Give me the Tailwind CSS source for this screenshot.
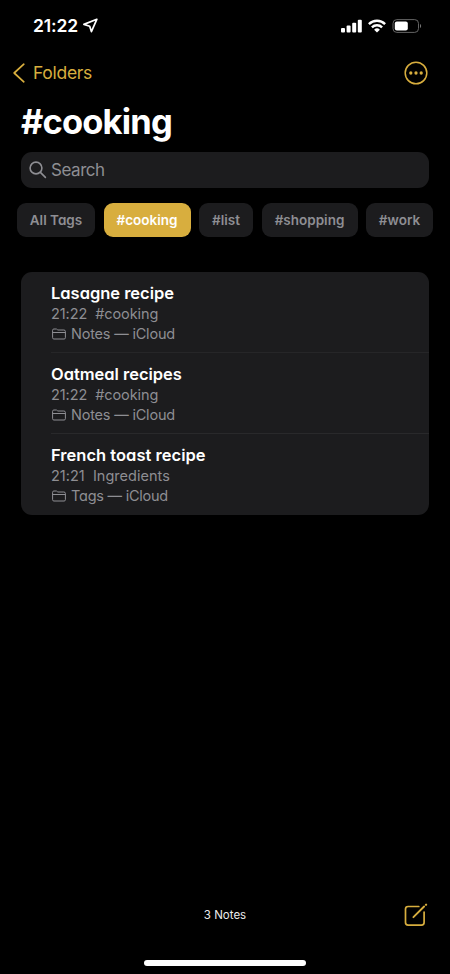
<!DOCTYPE html>
<html lang="en">
<head>
<meta charset="utf-8">
<meta name="viewport" content="width=device-width, initial-scale=1">
<title>Notes</title>
<script src="https://cdn.jsdelivr.net/npm/@tailwindcss/browser@4"></script>
</head>
<body class="bg-black">
<div class="flex h-[974px] w-[450px] flex-col overflow-hidden bg-black font-['Inter',sans-serif] text-white antialiased">
  <header class="flex h-[50px] shrink-0 items-center justify-between pt-px pr-[28px] pl-[33px]">
    <div class="flex items-center gap-[5px]">
      <span class="text-[17.5px] leading-[22px] font-semibold tracking-[-0.15px]">21:22</span>
      <svg class="h-[15px] w-[15px]" viewBox="0 0 15 15" fill="none" stroke="white" stroke-width="1.7" stroke-linejoin="round"><path d="M13.8 1.3 .9 6.4 6.7 8.2 8.4 13.6Z"/></svg>
    </div>
    <div class="flex items-center">
      <svg class="h-[14px] w-[21px]" viewBox="0 0 21 14" fill="white"><rect x="0" y="9" width="4" height="4.5" rx="1"/><rect x="5.6" y="6.5" width="4" height="7" rx="1"/><rect x="11.2" y="3.8" width="4" height="9.7" rx="1"/><rect x="16.8" y="0.7" width="4" height="12.8" rx="1"/></svg>
      <svg class="ml-[6.5px] h-[14px] w-[18px]" viewBox="0 0 18 14" fill="none" stroke="white" stroke-width="2.4"><path d="M.9 5.1a11.6 11.6 0 0 1 16.2 0"/><path d="M3.9 8.3a7.3 7.3 0 0 1 10.2 0"/><path d="M9 13.5 6.1 10.7a4.2 4.2 0 0 1 5.8 0Z" fill="white" stroke="none"/></svg>
      <svg class="ml-[6px] h-[14px] w-[30px]" viewBox="0 0 30 14" fill="none"><rect x="1" y=".6" width="25.5" height="12.8" rx="3.8" stroke="#646464" stroke-width="1"/><rect x="2.8" y="2.4" width="13" height="9.2" rx="2" fill="white"/><path d="M28 5c1.5.7 1.5 3.3 0 4Z" fill="#777"/></svg>
    </div>
  </header>

  <nav class="flex h-[45px] shrink-0 items-center justify-between pr-[22px] pl-[13px] text-[#d8ae3e]">
    <div class="flex items-center gap-[7px]">
      <svg class="h-[20px] w-[13px]" viewBox="0 0 13 20" fill="none" stroke="currentColor" stroke-width="1.7" stroke-linecap="round" stroke-linejoin="round"><path d="M10.8 1.2 1.2 10l9.6 8.8"/></svg>
      <span class="text-[17.5px] leading-6 tracking-[-0.3px]">Folders</span>
    </div>
    <svg class="h-6 w-6" viewBox="0 0 24 24" fill="none" stroke="currentColor" stroke-width="1.5"><circle cx="12" cy="12" r="10.8"/><g fill="currentColor" stroke="none"><circle cx="6.8" cy="12" r="1.65"/><circle cx="12" cy="12" r="1.65"/><circle cx="17.2" cy="12" r="1.65"/></g></svg>
  </nav>

  <h1 class="mt-[4px] h-[44px] shrink-0 pl-[21px] text-[34.5px] leading-[46px] font-bold tracking-[-0.85px]">#cooking</h1>

  <div class="mx-[21px] mt-[9px] flex h-[36px] shrink-0 items-center gap-[4px] rounded-[11px] bg-[#1c1c1e] pl-[8px] text-[#8e8e93]">
    <svg class="h-[18px] w-[18px]" viewBox="0 0 18 18" fill="none" stroke="currentColor" stroke-width="1.6" stroke-linecap="round"><circle cx="7" cy="7" r="5.9"/><path d="m11.4 11.4 5 5"/></svg>
    <span class="text-[17px] leading-6 tracking-[-0.45px]">Search</span>
  </div>

  <div class="mt-[15px] flex h-[34px] shrink-0 gap-[8.5px] pl-[17px] text-[13.5px] font-semibold text-[#8e8e93] [font-feature-settings:'cv11']">
    <div class="flex w-[78px] shrink-0 items-center justify-center rounded-[9px] bg-[#1c1c1e]">All Tags</div>
    <div class="flex w-[87px] shrink-0 items-center justify-center rounded-[9px] bg-[#d8ae3e] text-white">#cooking</div>
    <div class="flex w-[54px] shrink-0 items-center justify-center rounded-[9px] bg-[#1c1c1e]">#list</div>
    <div class="flex w-[96px] shrink-0 items-center justify-center rounded-[9px] bg-[#1c1c1e]">#shopping</div>
    <div class="flex w-[67px] shrink-0 items-center justify-center rounded-[9px] bg-[#1c1c1e]">#work</div>
  </div>

  <main class="mx-[21px] mt-[35px] h-[243px] shrink-0 rounded-[11px] bg-[#1c1c1e] pl-[30px] text-[14.5px] leading-[20px] tracking-[-0.08px] text-[#8e8e93] [font-feature-settings:'cv11']">
    <article class="h-[81px] border-b border-[#262628] pt-[10px]">
      <h2 class="h-[22px] text-[16.5px] leading-[22px] font-semibold tracking-[-0.02px] text-white">Lasagne recipe</h2>
      <p class="whitespace-pre">21:22  #cooking</p>
      <p class="flex items-center gap-[5px] pl-px"><svg class="h-[12px] w-[14px]" viewBox="0 0 14 12" fill="none" stroke="currentColor"><path d="M.6 9.7V2.3Q.6 1 1.9 1h2.2q.6 0 1 .4l.7.6h6.1q1.5 0 1.5 1.5v6.2q0 1.3-1.3 1.3H1.9Q.6 11 .6 9.7ZM.6 4.5h12.8"/></svg><span class="tracking-[-0.2px]">Notes — iCloud</span></p>
    </article>
    <article class="h-[81px] border-b border-[#29292b] pt-[10px]">
      <h2 class="h-[22px] text-[16.5px] leading-[22px] font-semibold tracking-[-0.02px] text-white">Oatmeal recipes</h2>
      <p class="whitespace-pre">21:22  #cooking</p>
      <p class="flex items-center gap-[5px] pl-px"><svg class="h-[12px] w-[14px]" viewBox="0 0 14 12" fill="none" stroke="currentColor"><path d="M.6 9.7V2.3Q.6 1 1.9 1h2.2q.6 0 1 .4l.7.6h6.1q1.5 0 1.5 1.5v6.2q0 1.3-1.3 1.3H1.9Q.6 11 .6 9.7ZM.6 4.5h12.8"/></svg><span class="tracking-[-0.2px]">Notes — iCloud</span></p>
    </article>
    <article class="h-[81px] pt-[10px]">
      <h2 class="h-[22px] text-[16.5px] leading-[22px] font-semibold tracking-[0.02px] text-white">French toast recipe</h2>
      <p class="whitespace-pre tracking-[0.02px]">21:21  Ingredients</p>
      <p class="flex items-center gap-[5px] pl-px"><svg class="h-[12px] w-[14px]" viewBox="0 0 14 12" fill="none" stroke="currentColor"><path d="M.6 9.7V2.3Q.6 1 1.9 1h2.2q.6 0 1 .4l.7.6h6.1q1.5 0 1.5 1.5v6.2q0 1.3-1.3 1.3H1.9Q.6 11 .6 9.7ZM.6 4.5h12.8"/></svg><span class="tracking-[-0.24px]">Tags — iCloud</span></p>
    </article>
  </main>

  <footer class="mt-auto h-[74px] shrink-0">
    <div class="grid h-[30px] grid-cols-[1fr_auto_1fr] items-center pr-[22px] pl-[22px]">
      <span></span>
      <span class="text-[11.5px] leading-[16px] text-[#ececec]">3 Notes</span>
      <svg class="h-[24px] w-[24px] justify-self-end text-[#d8ae3e]" viewBox="0 0 24 24" fill="none" stroke="currentColor" stroke-width="1.7" stroke-linecap="round"><path d="M14.8 3.5H4.1Q1.5 3.5 1.5 6.1V19.5Q1.5 22.1 4.1 22.1H17.5Q20.1 22.1 20.1 19.5V9"/><path d="m9.4 14.2 10.7-10.7" stroke-width="1.9"/><path d="m22 1.8.1-.1" stroke-width="2.2"/></svg>
    </div>
    <div class="mx-auto mt-[30px] h-[6px] w-[162px] rounded-full bg-white"></div>
  </footer>
</div>
</body>
</html>
